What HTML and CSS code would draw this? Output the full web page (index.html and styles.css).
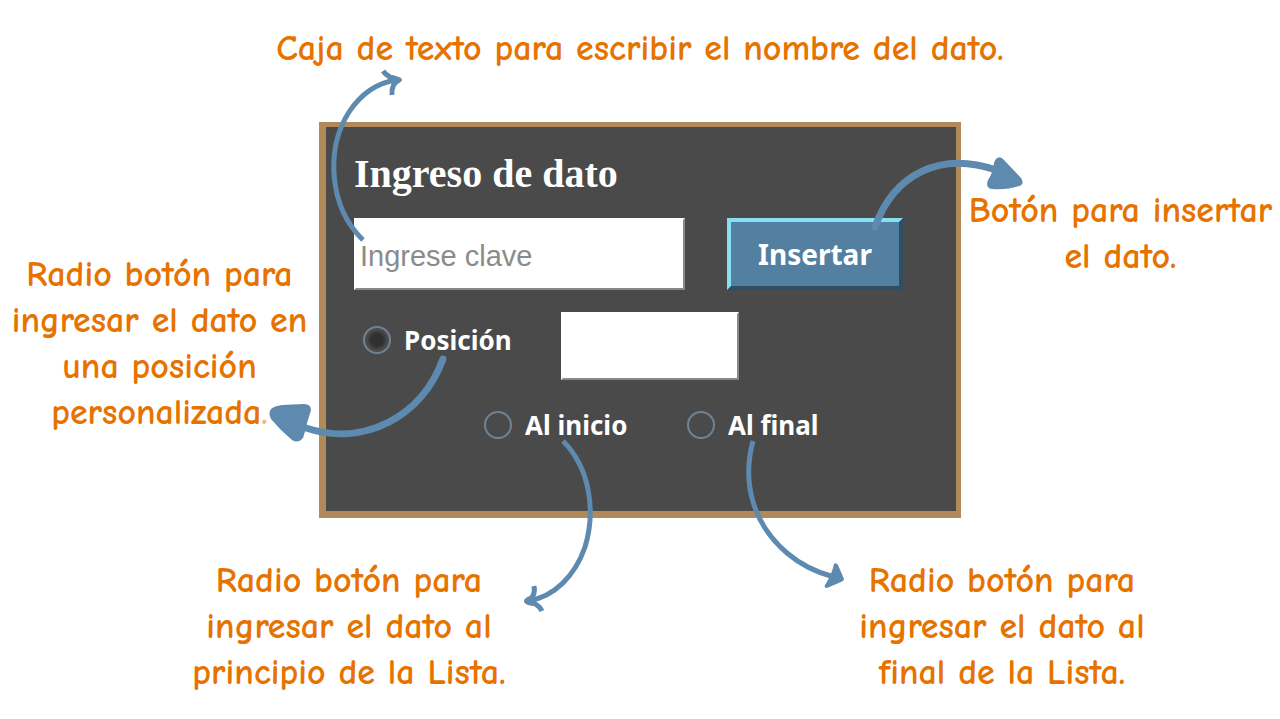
FILE: index.html
```
<!DOCTYPE html>
<html lang="es">
<head>
<meta charset="utf-8">
<meta name="viewport" content="width=device-width, initial-scale=1">
<title>Ingreso de dato</title>
<link rel="stylesheet" href="styles.css">
</head>
<body>
<main class="guide">
  <p class="note note-top">Caja de texto para escribir el nombre del dato.</p>
  <div class="middle">
    <p class="note note-left">Radio botón para<br>ingresar el dato en<br>una posición<br>personalizada<span class="faint">.</span></p>
    <div class="stage">
      <form class="panel">
        <h1 class="title">Ingreso de dato</h1>
        <div class="key-row">
          <input class="field" type="text" placeholder="Ingrese clave" aria-label="Ingrese clave">
          <button class="insert" type="button">Insertar</button>
        </div>
        <div class="position-row">
          <label class="choice"><input class="radio" type="radio" name="lugar" checked>Posición</label>
          <input class="field" type="text" aria-label="Número de posición">
        </div>
        <div class="ends-row">
          <label class="choice"><input class="radio" type="radio" name="lugar">Al inicio</label>
          <label class="choice"><input class="radio" type="radio" name="lugar">Al final</label>
        </div>
      </form>
      <svg class="arrows" viewBox="319 122 642 396" aria-hidden="true">
        <g class="line">
          <path d="M363 240C328 206 326 148 349 112C361 94 376 83 396 80"/>
          <path d="M383 71Q388 78 399 80Q391 84 392 95"/>
          <path d="M563 441C590 468 596 511 585 547C575 576 554 597 528 601"/>
          <path d="M534 586Q536 597 527 601Q538 603 542 611"/>
          <path d="M753 441C741 485 755 526 787 553C801 565 815 572 834 577"/>
        </g>
        <g class="line thick">
          <path d="M875 227C894 174 940 151 996 170"/>
          <path d="M443 359C422 417 364 447 306 428"/>
        </g>
        <g class="head">
          <path d="M392 75Q401 77 402 80Q401 83 393 85Z"/>
          <path d="M534 595Q524 597 524 601Q524 605 533 606Z"/>
          <path d="M996 159Q1000 155 1004 160L1021 178Q1025 184 1019 186Q1008 190 992 189Q985 188 988 180Q993 173 994 163Q995 160 996 159Z"/>
          <path d="M271 409Q274 406 282 405L304 404Q311 404 311 410Q309 417 307 423Q306 429 303 438Q298 444 292 440Q280 430 271 419Q268 413 271 409Z"/>
          <path d="M834 564Q836 562 838 565L844 579Q844 581 841 582L827 588Q824 588 825 585Q832 574 834 564Z"/>
        </g>
      </svg>
    </div>
    <p class="note note-right">Botón para insertar<br>el dato.</p>
  </div>
  <div class="bottom">
    <p class="note">Radio botón para<br>ingresar el dato al<br>principio de la Lista.</p>
    <p class="note">Radio botón para<br>ingresar el dato al<br>final de la Lista.</p>
  </div>
</main>
</body>
</html>
```
FILE: styles.css
```
* { box-sizing: border-box; }
body { margin: 0; background: #fff; }
.guide { padding-top: 26px; }
.note {
  margin: 0;
  color: #e67300;
  font: bold 36px/46px "Comic Sans MS", "Comic Neue", "Noto Sans", sans-serif;
  font-variant-ligatures: none;
  text-align: center;
  white-space: nowrap;
}
.note-top { margin-bottom: 50px; }
.middle {
  display: grid;
  grid-template-columns: minmax(0, 1fr) minmax(auto, 642px) minmax(0, 1fr);
}
.note-left { padding-top: 130px; }
.faint { opacity: 0.5; }
.note-right { padding-top: 66px; }
.stage { position: relative; }
.panel {
  padding: 25px 24px 65px 28px;
  border: solid #b08a58;
  border-width: 5px 5px 7px 7px;
  background: #4a4a4a;
  color: #fff;
  font: bold 26px/44px "Noto Sans", sans-serif;
}
.title {
  margin: 0 0 22px;
  font: bold 40px/44px "Liberation Serif", serif;
}
.key-row {
  display: grid;
  grid-template-columns: 331px 176px;
  gap: 42px;
  height: 72px;
  margin-bottom: 22px;
}
.field {
  min-width: 0;
  padding: 4px 4px 0;
  border: 2px solid;
  border-color: #fff #888 #888 #fff;
  background: #fff;
  font: 29px "Liberation Sans", sans-serif;
}
.field::placeholder { color: #8b8b8b; opacity: 1; }
.insert {
  padding: 0;
  border: 4px solid;
  border-color: #87dff5 #2d4e63 #2d4e63 #87dff5;
  background: #5380a0;
  color: #fff;
  font: bold 28px "Noto Sans", sans-serif;
}
.position-row {
  display: grid;
  grid-template-columns: 198px 178px;
  height: 68px;
  margin-bottom: 22px;
  padding-left: 9px;
}
.choice {
  display: flex;
  align-items: center;
  gap: 13px;
  height: 46px;
}
.position-row .choice { height: 56px; }
.ends-row {
  display: grid;
  grid-template-columns: 203px 203px;
  height: 44px;
  padding-left: 130px;
}
.radio {
  appearance: none;
  width: 28px;
  height: 28px;
  margin: 0;
  border: 2px solid #718295;
  border-radius: 50%;
}
.radio:checked { background: radial-gradient(circle, #303030 35%, #4a4a4a 60%); }
.arrows {
  position: absolute;
  inset: 0;
  width: 100%;
  height: 100%;
  overflow: visible;
  pointer-events: none;
}
.line { fill: none; stroke: #5d8aae; stroke-width: 5; stroke-linejoin: round; }
.thick { stroke-width: 7; stroke-linecap: round; }
.head { fill: #5d8aae; }
.bottom {
  display: flex;
  justify-content: space-between;
  padding: 40px 118px 20px 189px;
}
.bottom .note { flex: 0 1 320px; }
```
